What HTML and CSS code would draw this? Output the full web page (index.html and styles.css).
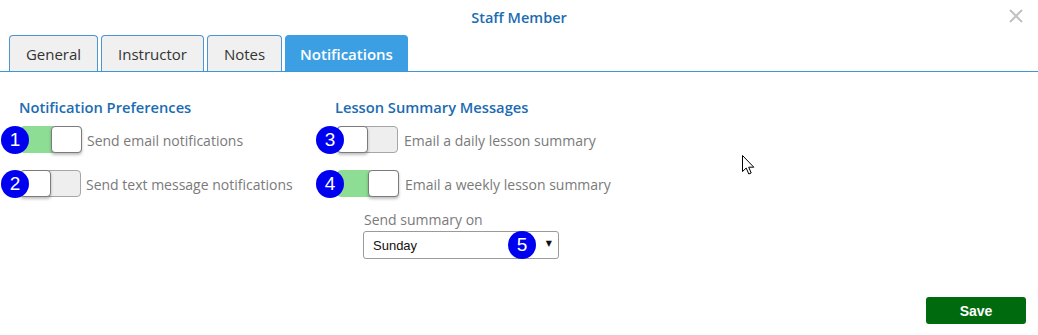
FILE: index.html
```html
<!DOCTYPE html>
<html>
<head>
<meta charset="utf-8">
<link rel="stylesheet" href="styles.css">
</head>
<body>
<div class="dialog">
  <div class="header">
    <span class="title">Staff Member</span>
    <svg class="close" width="14" height="14" viewBox="0 0 14 14"><path d="M1 1 L13 13 M13 1 L1 13" stroke="#c2c2c2" stroke-width="2"/></svg>
  </div>
  <div class="tabs">
    <div class="tab">General</div>
    <div class="tab">Instructor</div>
    <div class="tab">Notes</div>
    <div class="tab active">Notifications</div>
  </div>
  <div class="content">
    <div class="col col-left">
      <h3 class="heading">Notification Preferences</h3>
      <div class="row">
        <div class="toggle on"><span class="knob"></span><span class="badge b-left">1</span></div>
        <span class="label">Send email notifications</span>
      </div>
      <div class="row">
        <div class="toggle"><span class="knob"></span><span class="badge b-left">2</span></div>
        <span class="label">Send text message notifications</span>
      </div>
    </div>
    <div class="col col-right">
      <h3 class="heading">Lesson Summary Messages</h3>
      <div class="row">
        <div class="toggle"><span class="knob"></span><span class="badge b-right">3</span></div>
        <span class="label">Email a daily lesson summary</span>
      </div>
      <div class="row">
        <div class="toggle on"><span class="knob"></span><span class="badge b-right">4</span></div>
        <span class="label">Email a weekly lesson summary</span>
      </div>
      <div class="summary">
        <div class="summary-label">Send summary on</div>
        <div class="select">
          <span class="select-value">Sunday</span>
          <span class="arrow">&#9660;</span>
          <span class="badge b-select">5</span>
        </div>
      </div>
    </div>
  </div>
  <div class="footer">
    <button class="save">Save</button>
  </div>
  <svg class="cursor" width="13" height="21" viewBox="0 0 13 21">
    <path d="M0.5 0.5 L0.5 16.5 L4.2 13 L6.8 19 L9.2 18 L6.7 12.2 L11.8 12.2 Z" fill="#fff" stroke="#000" stroke-width="1" stroke-linejoin="round"/>
  </svg>
</div>
</body>
</html>
```

FILE: styles.css
```css
* { box-sizing: border-box; }
html, body { margin: 0; padding: 0; background: #fff; }
body { font-family: "Open Sans", "Liberation Sans", sans-serif; width: 1038px; height: 335px; overflow: hidden; }
.dialog { position: relative; width: 1038px; height: 335px; }

.header { height: 35px; position: relative; display: flex; justify-content: center; align-items: center; }
.title { color: #1b6cb3; font-size: 14.5px; font-weight: 600; margin-left: 0; }
.close { position: absolute; right: 15px; top: 9px; }

.tabs { display: flex; gap: 3px; padding-left: 9px; border-bottom: 1px solid #3c97d8; height: 37px; }
.tab { height: 36px; border: 1px solid #4e94d2; border-bottom: none; border-radius: 4px 4px 0 0; background: #f0f0f0; color: #333; font-size: 15px; display: flex; align-items: center; justify-content: center; padding: 0; }
.tab:nth-child(1) { width: 89px; }
.tab:nth-child(2) { width: 103px; }
.tab:nth-child(3) { width: 75px; }
.tab.active { width: 123px; background: #3c9fe3; border-color: #3c9fe3; color: #fff; font-weight: 600; }

.content { display: flex; padding: 24px 0 0 20px; height: 225px; }
.col-left { width: 317px; }
.col-right { width: 320px; }
.heading { margin: 0 0 8px -1px; color: #1b6cb3; font-size: 14.7px; font-weight: 600; line-height: 22px; }
.col-right .heading { margin-left: -2px; }
.row { display: flex; align-items: center; height: 27px; margin-bottom: 17px; }
.label { color: #7a7a7a; font-size: 14px; margin-left: 5px; margin-top: 2px; }
.col-right .label { margin-left: 6px; }

.toggle { position: relative; width: 61px; height: 27px; border: 1px solid #a6a6a6; border-radius: 4px; background: #eeeeee; }
.toggle.on { background: #8edd94; border-color: #8edd94; width: 62px; }
.knob { position: absolute; left: -1px; top: -1px; width: 31px; height: 27px; background: #fff; border: 1px solid #7b7b7b; border-radius: 4px; box-shadow: 0 2px 3px rgba(0,0,0,0.25); }
.toggle.on .knob { left: auto; right: -1px; }

.badge { position: absolute; width: 28px; height: 28px; border-radius: 50%; background: #0000f0; color: #fff; font-family: "Liberation Sans", Arial, sans-serif; font-size: 19px; display: flex; align-items: center; justify-content: center; }
.b-left { left: -20px; top: -1px; }
.b-right { left: -22px; top: -1px; }

.summary { margin-left: 26px; margin-top: -3px; }
.summary-label { color: #7a7a7a; font-size: 14px; line-height: 18px; margin-bottom: 2px; margin-left: 1px; }
.select { position: relative; width: 196px; height: 28px; border: 1px solid #9a9a9a; border-radius: 3px; display: flex; align-items: center; padding-left: 9px; }
.select-value { font-family: "Liberation Sans", Arial, sans-serif; font-size: 13px; color: #111; }
.arrow { position: absolute; right: 6px; top: 7px; font-size: 8px; color: #111; font-family: "DejaVu Sans", sans-serif; }
.b-select { left: 144px; top: -1px; }

.footer { display: flex; justify-content: flex-end; padding-right: 12px; }
.save { width: 100px; height: 27px; background: #006b0e; color: #fff; border: none; border-radius: 3px; font-family: "Liberation Sans", Arial, sans-serif; font-weight: bold; font-size: 14px; padding: 0; }

.cursor { position: absolute; left: 742px; top: 155px; }
```
